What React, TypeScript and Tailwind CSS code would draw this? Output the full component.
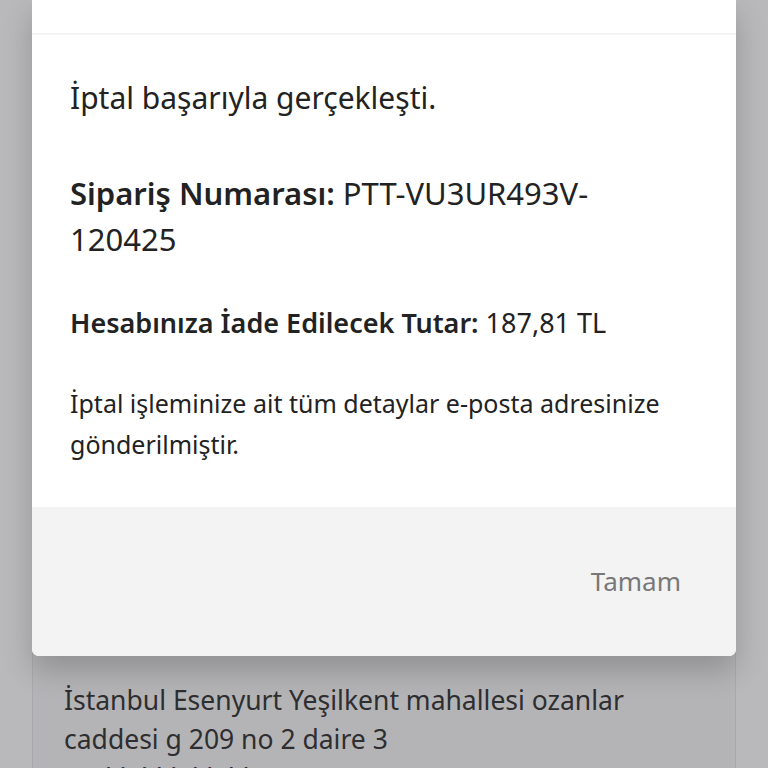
export default function App() {
  return (
    <div
      className="relative h-[768px] w-[768px] overflow-hidden bg-[#b9b9bc]"
      style={{ fontFamily: '"Noto Sans", "Open Sans", sans-serif' }}
    >
      {/* page behind the overlay */}
      <div className="mx-[32px] h-full border-x border-[#a9a9ad] bg-[#b4b4b7]">
        <div className="pt-[681px] pl-[31px] text-[26.5px] leading-[39px] text-[#2e2e30]">
          <p>İstanbul Esenyurt Yeşilkent mahallesi ozanlar</p>
          <p>caddesi g 209 no 2 daire 3</p>
          <p>0 5** *** ** **</p>
        </div>
      </div>

      {/* dialog */}
      <div className="absolute left-[32px] top-0 w-[704px] overflow-hidden rounded-b-[7px] bg-white shadow-[0_14px_30px_rgba(0,0,0,0.2)]">
        <div className="h-[35px] border-b-2 border-[#f4f4f4]" />
        <div className="pl-[38px] pr-[16px] pt-[43px] pb-[42px] text-[#222]">
          <p className="text-[30px] leading-[40px]">İptal başarıyla gerçekleşti.</p>
          <p className="mt-[52px] text-[31px] leading-[46px]">
            <span className="font-semibold">Sipariş Numarası:</span> PTT-VU3UR493V-
            <br />
            120425
          </p>
          <p className="mt-[41px] text-[27px] leading-[40px]">
            <span className="font-semibold">Hesabınıza İade Edilecek Tutar:</span> 187,81 TL
          </p>
          <p className="mt-[40px] text-[25px] leading-[41px]">
            İptal işleminize ait tüm detaylar e-posta adresinize gönderilmiştir.
          </p>
        </div>
        <div className="flex h-[149px] items-center justify-end bg-[#f3f3f3] pr-[55px]">
          <button className="text-[26px] text-[#787878]">Tamam</button>
        </div>
      </div>
    </div>
  )
}
